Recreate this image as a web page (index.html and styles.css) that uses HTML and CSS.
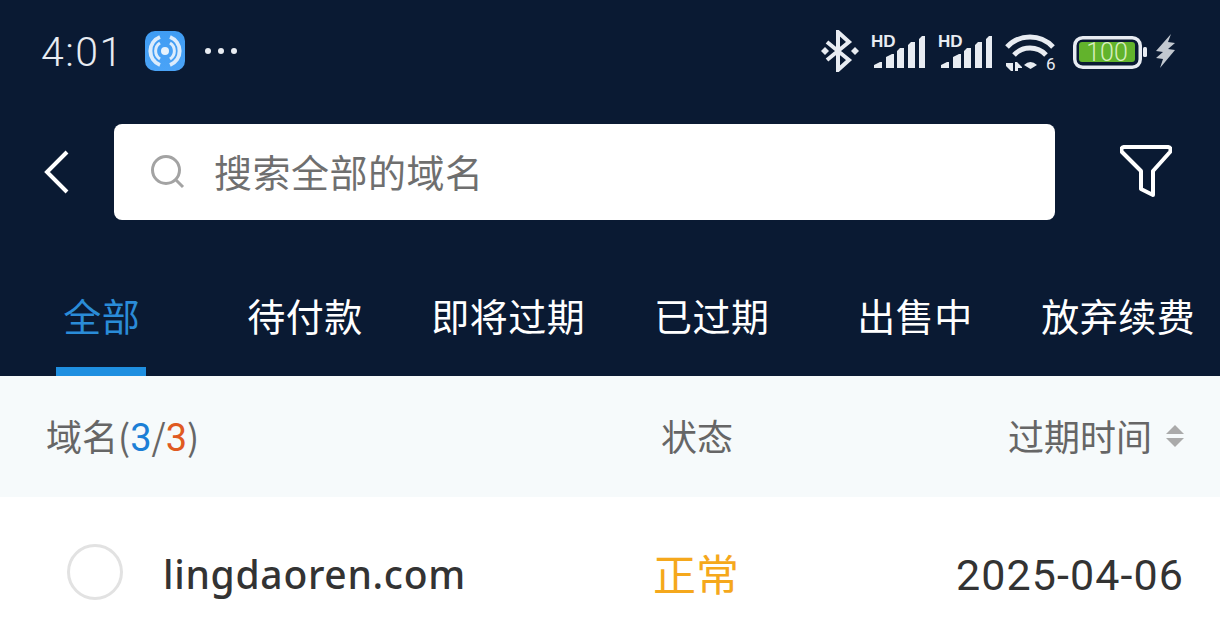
FILE: index.html
```html
<!DOCTYPE html>
<html lang="zh">
<head>
<meta charset="utf-8">
<title>域名</title>
<link rel="stylesheet" href="styles.css">
</head>
<body>
<div class="dark">
  <div class="status">
    <div class="status-left">
      <span class="time">4:01</span>
      <svg class="app" width="40" height="40" viewBox="0 0 40 40">
        <defs><linearGradient id="g" x1="0" y1="0" x2="0" y2="1"><stop offset="0" stop-color="#3f9cf3"/><stop offset="1" stop-color="#4aa3f7"/></linearGradient></defs>
        <rect width="40" height="40" rx="10" fill="url(#g)"/>
        <circle cx="20" cy="20" r="4" fill="#e6f2fd"/>
        <path d="M15 12A9.500 9.500 0 0 0 15 28M25 12A9.500 9.500 0 0 1 25 28" fill="none" stroke="#dcecfc" stroke-width="3"/>
        <path d="M15 6A15 15 0 0 0 15 34M25 6A15 15 0 0 1 25 34" fill="none" stroke="#dcecfc" stroke-width="4"/>
      </svg>
      <span class="dots"><i></i><i></i><i></i></span>
    </div>
    <div class="status-right">
      <svg class="bt" width="38" height="42" viewBox="0 0 38 42"><path d="M6 12L28 30L17 40V2L28 12L6 30" fill="none" stroke="#e8ecf2" stroke-width="4"/><path d="M4 17l4 4-4 4-4-4zM34 17l4 4-4 4-4-4z" fill="#e8ecf2"/></svg>
      <svg class="sig" width="55" height="36" viewBox="0 0 55 36"><text x="0" y="14" class="hd">HD</text><path d="M3 35v-3l6-3h2v6zM15 35V24l6-3h2v14zM26 35V18l3-3h4v20zM37 35V12l3-3h4v26zM48 35V6l3-3h3v32z" fill="#e8ecf2"/></svg>
      <svg class="sig" width="55" height="36" viewBox="0 0 55 36"><text x="0" y="14" class="hd">HD</text><path d="M3 35v-3l6-3h2v6zM15 35V24l6-3h2v14zM26 35V18l3-3h4v20zM37 35V12l3-3h4v26zM48 35V6l3-3h3v32z" fill="#e8ecf2"/></svg>
      <svg class="wifi" width="52" height="40" viewBox="0 0 52 40"><path d="M2 14A31.500 31.500 0 0 1 48 14" fill="none" stroke="#e8ecf2" stroke-width="5"/><path d="M9 22A22 22 0 0 1 41 22" fill="none" stroke="#e8ecf2" stroke-width="5"/><path d="M19 32Q25.500 26 32 32L25.500 36Z" fill="#e8ecf2"/><path d="M1 30h7v8H6l-5-5zM10 38v-9h2l5 5v1h-4v3z" fill="#e8ecf2"/><text x="41" y="37" class="six">6</text></svg>
      <svg class="batt" width="75" height="34" viewBox="0 0 75 34"><rect x="1.750" y="1.750" width="65.500" height="29.500" rx="8" fill="none" stroke="#e8ecf2" stroke-width="3.500"/><rect x="6" y="6" width="56" height="20" rx="3" fill="#62b32c"/><rect x="70" y="11" width="4" height="10" rx="1.500" fill="#e8ecf2"/><text x="34" y="24.500" text-anchor="middle" class="pct">100</text></svg>
      <svg class="bolt" width="20" height="34" viewBox="0 0 20 34"><path d="M16 0L1 17l7 1-7 6 7 1-3 9 15-18-7-1 7-6-7-1z" fill="#c2c8d0"/></svg>
    </div>
  </div>
  <div class="search-row">
    <svg class="back" width="25" height="44" viewBox="0 0 25 44"><path d="M23 2L3 22L23 42" fill="none" stroke="#fff" stroke-width="4"/></svg>
    <div class="search">
      <svg width="36" height="36" viewBox="0 0 36 36"><circle cx="16" cy="16" r="13.500" fill="none" stroke="#a3a3a3" stroke-width="3"/><path d="M26 26l7 7" stroke="#a3a3a3" stroke-width="3" fill="none"/></svg>
      <span class="search-text">搜索全部的域名</span>
    </div>
    <svg class="filter" width="52" height="54" viewBox="0 0 52 54"><path d="M4 2H48Q52 3 50 7L33 26V50L21 44V26L2 7Q0 3 4 2Z" fill="none" stroke="#fff" stroke-width="4" stroke-linejoin="round"/></svg>
  </div>
  <div class="tabs">
    <div class="tab active">全部</div>
    <div class="tab">待付款</div>
    <div class="tab">即将过期</div>
    <div class="tab">已过期</div>
    <div class="tab">出售中</div>
    <div class="tab">放弃续费</div>
  </div>
</div>
<div class="thead">
  <div class="c1">域名(<b class="blue">3</b>/<b class="red">3</b>)</div>
  <div class="c2">状态</div>
  <div class="c3">过期时间<span class="sort"><i class="up"></i><i class="down"></i></span></div>
</div>
<div class="row">
  <div class="r1"><span class="radio"></span><span class="domain">lingdaoren.com</span></div>
  <div class="r2">正常</div>
  <div class="r3">2025-04-06</div>
</div>
</body>
</html>
```
FILE: styles.css
```css
* { box-sizing: border-box; }
html, body { margin: 0; height: 100%; }
body { width: 1220px; height: 643px; overflow: hidden; background: #fff; font-family: "Noto Sans CJK SC", "Noto Sans", sans-serif; }
.dark { background: #0a1a33; height: 376px; display: flex; flex-direction: column; }
.status { height: 102px; display: flex; justify-content: space-between; align-items: center; padding: 0 45px 0 41px; }
.status-left { display: flex; align-items: center; }
.time { font: 300 41px/1 Roboto, sans-serif; color: #e8ecf2; letter-spacing: 1.500px; width: 104px; padding-top: 2px; }
.dots { display: flex; gap: 7px; margin-left: 20px; }
.dots i { width: 6px; height: 6px; border-radius: 50%; background: #e8ecf2; }
.status-right { display: flex; align-items: center; gap: 12px; }
.wifi { margin-top: 4px; }
.batt { margin: 4px -5px 0 4px; }
.hd { font: 700 17px "Liberation Sans", sans-serif; fill: #e8ecf2; }
.six { font: 400 17px Roboto, sans-serif; fill: #e8ecf2; }
.pct { font: 300 25px Roboto, sans-serif; fill: #d8efc0; }
.search-row { display: flex; align-items: center; padding: 22px 48px 0 44px; }
.back { margin-right: 45px; }
.search { width: 941px; height: 96px; background: #fff; border-radius: 8px; display: flex; align-items: center; padding-left: 36px; gap: 28px; color: #6f6f6f; font-size: 38px; letter-spacing: 0.500px; }
.search-text { padding-bottom: 4px; }
.filter { margin-left: auto; }
.tabs { display: grid; grid-template-columns: repeat(6, 1fr); margin-top: auto; height: 96px; }
.tab { color: #fff; font-size: 38px; letter-spacing: 0.500px; display: flex; justify-content: center; padding-top: 7px; position: relative; }
.tab.active { color: #2a8cd8; }
.tab.active::after { content: ""; position: absolute; left: 56px; bottom: 0; width: 90px; height: 9px; background: #1f8fe0; }
.thead { height: 121px; background: #f6fafb; display: grid; grid-template-columns: 600px 1fr 1fr; align-items: center; padding: 0 36px 4px 46px; color: #666; font-size: 36px; }
.c1 b { font-weight: 400; font-family: Roboto, sans-serif; font-size: 38px; }
.blue { color: #1c7fd6; }
.red { color: #e05a22; }
.c2 { padding-left: 15px; }
.c3 { display: flex; align-items: center; justify-content: flex-end; gap: 14px; }
.sort { display: flex; flex-direction: column; gap: 4px; padding-top: 2px; }
.sort i { width: 0; height: 0; border-left: 9px solid transparent; border-right: 9px solid transparent; }
.sort .up { border-bottom: 9px solid #aaa; }
.sort .down { border-top: 9px solid #aaa; }
.row { height: 146px; display: grid; grid-template-columns: 600px 1fr 1fr; align-items: center; padding: 6px 36px 0 67px; }
.r1 { display: flex; align-items: center; gap: 40px; }
.radio { width: 56px; height: 56px; margin-bottom: 2px; border: 3px solid #e2e2e2; border-radius: 50%; }
.domain { font: 500 39px "Noto Sans", sans-serif; color: #333; letter-spacing: 0.700px; }
.r2 { font-size: 43px; color: #f5a81c; margin-left: -14px; padding-bottom: 2px; }
.r3 { font: 400 43px Roboto, sans-serif; color: #333; text-align: right; letter-spacing: 1.100px; white-space: nowrap; padding-top: 4px; }
```
